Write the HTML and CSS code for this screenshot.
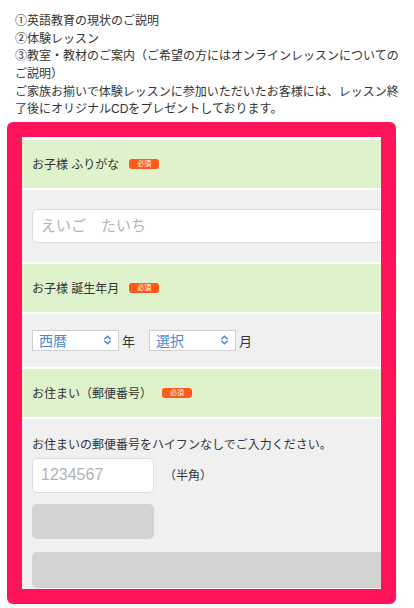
FILE: index.html
```html
<!DOCTYPE html>
<html lang="ja">

<head>
    <meta charset="UTF-8">
    <meta name="viewport" content="width=device-width, initial-scale=1.0">
    <title>無料体験レッスンお申し込み</title>
    <link rel="stylesheet" href="styles.css">
</head>

<body>
    <div class="intro">
        <p>①英語教育の現状のご説明</p>
        <p>②体験レッスン</p>
        <p>③教室・教材のご案内（ご希望の方にはオンラインレッスンについてのご説明）</p>
        <p>ご家族お揃いで体験レッスンに参加いただいたお客様には、レッスン終了後にオリジナルCDをプレゼントしております。</p>
    </div>

    <div class="entry">
        <div class="form">
            <div class="head">
                <span class="label">お子様 ふりがな</span>
                <span class="must">必須</span>
            </div>
            <div class="body body-kana">
                <input class="text wide kana" type="text" placeholder="えいご　たいち">
            </div>

            <div class="head">
                <span class="label">お子様 誕生年月</span>
                <span class="must">必須</span>
            </div>
            <div class="body body-birth">
                <div class="select">
                    <span>西暦</span>
                    <svg width="9" height="10" viewBox="0 0 9 10"><path d="M1.3 4.2 L4.5 1.2 L7.7 4.2 M1.3 5.8 L4.5 8.8 L7.7 5.8" fill="none" stroke="#4a86d8" stroke-width="1.5"/></svg>
                </div>
                <span class="unit unit-year">年</span>
                <div class="select">
                    <span>選択</span>
                    <svg width="9" height="10" viewBox="0 0 9 10"><path d="M1.3 4.2 L4.5 1.2 L7.7 4.2 M1.3 5.8 L4.5 8.8 L7.7 5.8" fill="none" stroke="#4a86d8" stroke-width="1.5"/></svg>
                </div>
                <span class="unit">月</span>
            </div>

            <div class="head">
                <span class="label">お住まい（郵便番号）</span>
                <span class="must">必須</span>
            </div>
            <div class="body body-zip">
                <p class="note">お住まいの郵便番号をハイフンなしでご入力ください。</p>
                <div class="zip-row">
                    <input class="text short" type="text" placeholder="1234567">
                    <span class="half">（半角）</span>
                </div>
                <div class="btn short"></div>
                <div class="btn wide"></div>
            </div>
        </div>
    </div>
</body>

</html>
```

FILE: styles.css
```css
* {
    margin: 0;
    padding: 0;
    box-sizing: border-box;
}

body {
    background-color: #fff;
    color: #333;
    font-family: "Liberation Sans", "Noto Sans CJK JP", sans-serif;
    font-size: 12px;
}

.intro {
    padding: 13px 11px 0 15px;
    line-height: 17.66px;
}

/* 申し込みフォーム枠 */
.entry {
    position: relative;
    height: 482px;
    margin: 3px 18px 0 7px;
    padding: 15px 0 0 15px;
}

.entry::after {
    content: "";
    position: absolute;
    top: 0;
    left: 0;
    right: 0;
    bottom: 0;
    border: 15px solid #ff1359;
    border-radius: 6px;
    pointer-events: none;
}

.form {
    width: 375px;
    height: 465px;
    overflow: hidden;
    padding-top: 3px;
    background-color: #fff;
}

.head {
    height: 48px;
    margin-bottom: 2px;
    padding-left: 10px;
    display: flex;
    align-items: center;
    background-color: #def2cb;
    font-size: 12px;
}

.must {
    width: 30px;
    height: 10px;
    margin-left: 10px;
    border-radius: 3px;
    background-color: #ff5a1a;
    color: #fff;
    font-size: 7px;
    line-height: 10px;
    text-align: center;
}

.body {
    margin-bottom: 2px;
    padding: 0 10px;
    background-color: #f0f0f0;
}

.body-kana {
    height: 72px;
    padding-top: 19px;
}

.body-birth {
    height: 53px;
    display: flex;
    align-items: center;
}

.body-zip {
    padding-top: 18px;
    padding-bottom: 20px;
}

.text {
    display: block;
    height: 34px;
    padding: 0 8px;
    border: 1px solid #dcdcdc;
    border-radius: 5px;
    background-color: #fff;
    font-family: "Liberation Sans", "Noto Sans CJK JP", sans-serif;
    font-size: 16px;
    color: #333;
    outline: none;
}

.text::placeholder {
    color: #b3b3b3;
}

.kana {
    font-size: 15px;
}

.wide {
    width: 355px;
}

.short {
    width: 122px;
}

.select {
    width: 87px;
    height: 21px;
    padding: 0 6px 0 6px;
    display: flex;
    align-items: center;
    justify-content: space-between;
    border: 1px solid #cfcfcf;
    background-color: #fff;
    color: #4a86d8;
    font-size: 14px;
}

.unit {
    margin-left: 3px;
    font-size: 13px;
}

.unit-year {
    margin-right: 14px;
}

.note {
    line-height: 17px;
}

.zip-row {
    margin-top: 4px;
    display: flex;
    align-items: center;
}

.zip-row .text {
    height: 35px;
}

.half {
    margin-left: 10px;
    margin-top: -2px;
}

.btn {
    height: 35px;
    border-radius: 5px;
    background-color: #d3d3d3;
}

.btn.short {
    margin-top: 11px;
}

.btn.wide {
    height: 36px;
    margin-top: 13px;
}
```
